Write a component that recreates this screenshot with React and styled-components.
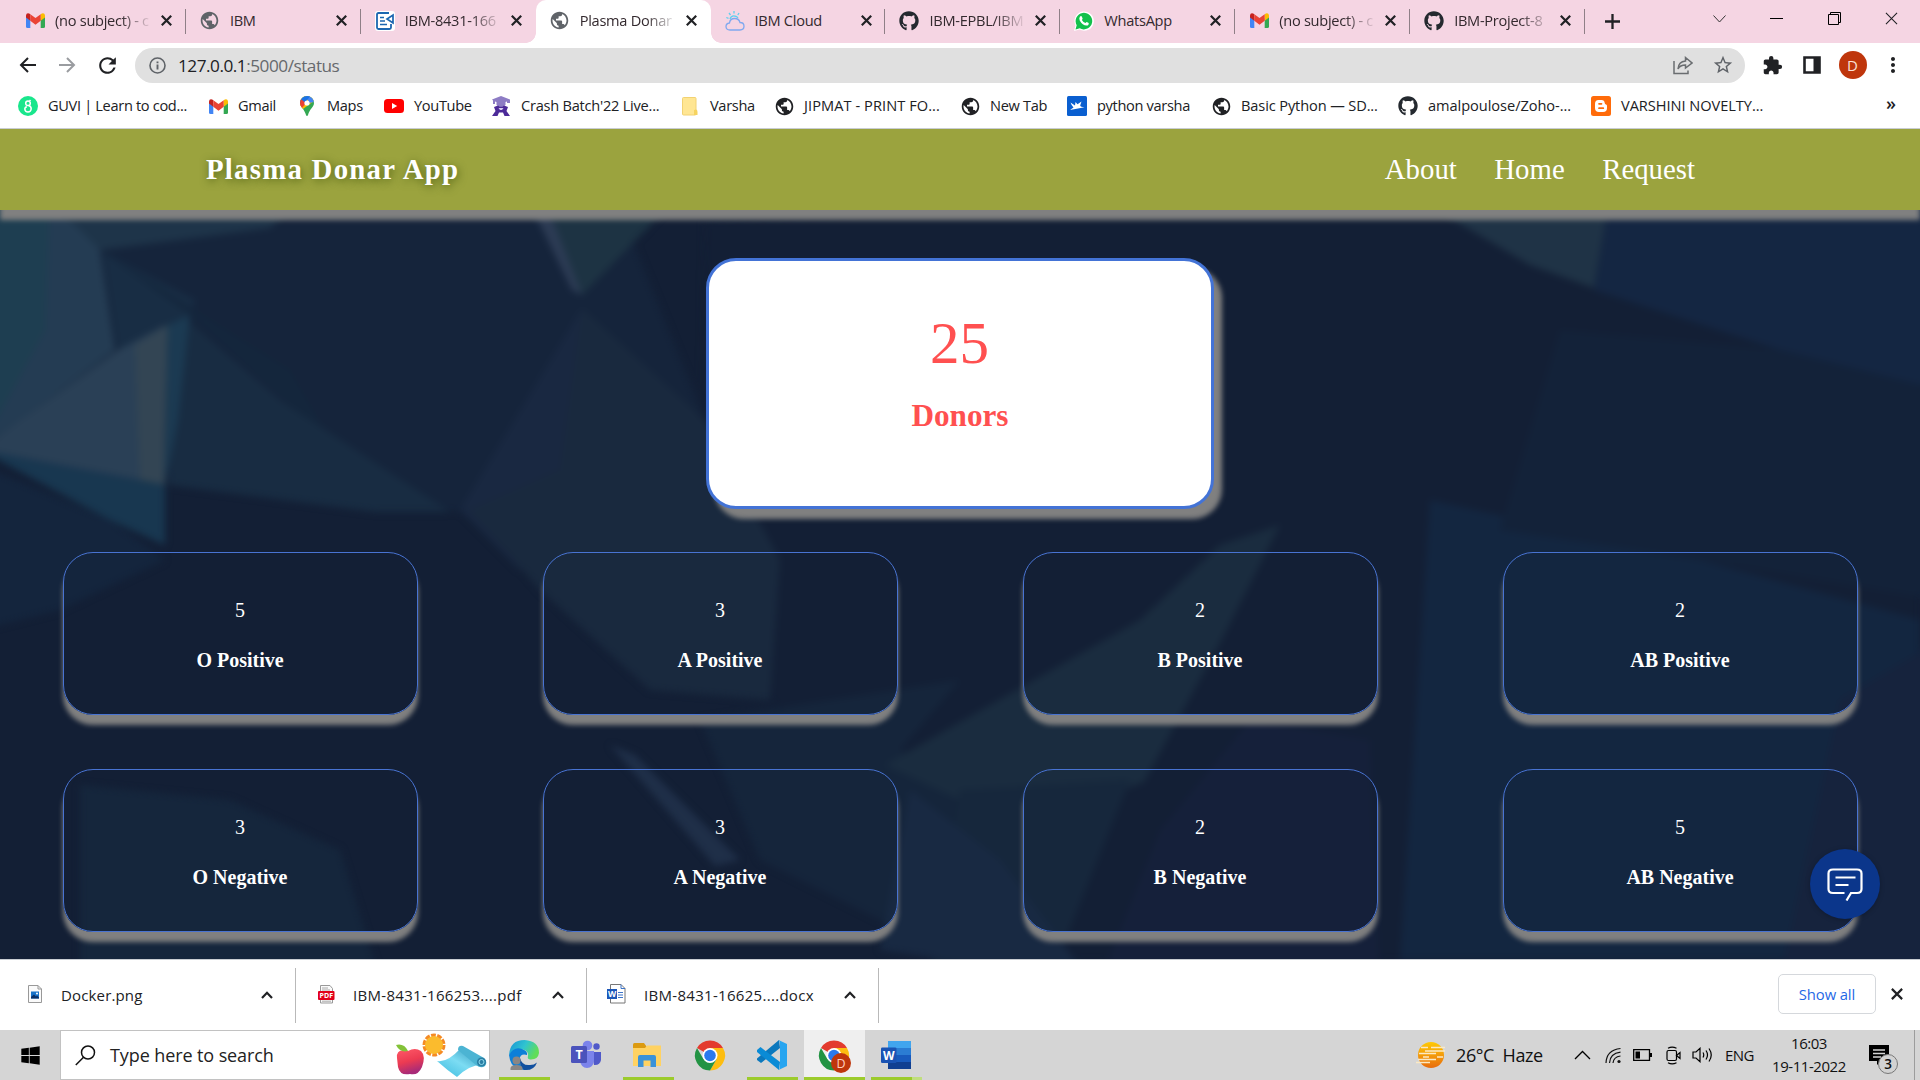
import React from "react";
import styled, { createGlobalStyle, css } from "styled-components";
import { FaGithub, FaWindows } from "react-icons/fa6";
import { MdPublic, MdExtension, MdStarBorder, MdRefresh, MdMoreVert } from "react-icons/md";

const ui = `"Open Sans", "Noto Sans", sans-serif`;
const serif = `"Liberation Serif", serif`;

const Global = createGlobalStyle`
  * { box-sizing: border-box; }
  body { margin: 0; overflow: hidden; font-family: ${ui}; color: #202124; }
  svg { display: block; flex: none; }
`;

const Screen = styled.div`
  width: 1920px;
  height: 1080px;
  display: flex;
  flex-direction: column;
  overflow: hidden;
  background: #fff;
`;

/* ---------- Browser tabs ---------- */

const TabStrip = styled.div`
  height: 43px;
  flex: none;
  display: flex;
  padding-left: 11px;
  background: #f5d5e3;
`;

const TabBox = styled.div`
  position: relative;
  width: 174.9px;
  height: 43px;
  padding-left: 14px;
  display: flex;
  align-items: center;
  padding-bottom: 2px;
  ${(p) => p.$divider && css`
    background: linear-gradient(#8f7f87, #8f7f87) right 0 top 9px / 1px 25px no-repeat;
  `}
  ${(p) => p.$active && css`
    background: #fff;
    border-radius: 10px 10px 0 0;
    &::before, &::after {
      content: "";
      position: absolute;
      bottom: 0;
      width: 10px;
      height: 10px;
    }
    &::before { left: -10px; background: radial-gradient(circle at 0 0, transparent 9.5px, #fff 10px); }
    &::after { right: -10px; background: radial-gradient(circle at 100% 0, transparent 9.5px, #fff 10px); }
  `}
`;

const IconSlot = styled.span`
  width: 20px;
  height: 20px;
  flex: none;
  display: flex;
  align-items: center;
  justify-content: center;
`;

const TabTitle = styled.span`
  width: 106px;
  margin-left: 10px;
  padding-bottom: 1px;
  white-space: nowrap;
  font-size: 14.6px;
  letter-spacing: -0.28px;
  color: #33292e;
  mask-image: ${(p) => (p.$fade ? "linear-gradient(90deg, #000 62%, transparent 92%)" : "none")};
`;

const NewTab = styled.div`
  width: 54px;
  display: flex;
  align-items: center;
  justify-content: center;
`;

const WindowButtons = styled.div`
  margin-left: auto;
  height: 37px;
  display: flex;
  align-items: center;
`;

const WindowButton = styled.span`
  width: 57.3px;
  display: flex;
  justify-content: center;
`;

/* ---------- Toolbar ---------- */

const Toolbar = styled.div`
  height: 45px;
  flex: none;
  display: flex;
  align-items: center;
  padding-left: 7px;
`;

const ToolButton = styled.span`
  width: ${(p) => p.$w || 40}px;
  height: 35px;
  display: flex;
  align-items: center;
  justify-content: center;
  padding-bottom: 1px;
`;

const Omnibox = styled.div`
  width: 1610px;
  height: 35px;
  margin: 0 7px 0 8px;
  border-radius: 18px;
  background: #e0e0e0;
  display: flex;
  align-items: center;
  padding: 0 2px 0 14px;
`;

const Url = styled.span`
  flex: 1;
  margin-left: 12px;
  font-size: 17.2px;
  letter-spacing: -0.48px;
  color: #202124;
  span { color: #66696d; }
`;

const Avatar = styled.span`
  width: 28px;
  height: 28px;
  border-radius: 50%;
  background: #bf360c;
  color: #fbe0d6;
  font: 15px/28px ${ui};
  text-align: center;
`;

/* ---------- Bookmarks ---------- */

const BookmarkBar = styled.div`
  height: 41px;
  flex: none;
  display: flex;
  align-items: flex-start;
  padding: 8px 0 0 18px;
  border-bottom: 1px solid #c9cdd2;
`;

const BookmarkBox = styled.div`
  width: ${(p) => p.$w}px;
  height: 20px;
  display: flex;
  align-items: center;
  white-space: nowrap;
  font-size: 14.6px;
  letter-spacing: ${(p) => p.$track ?? -0.33}px;
  gap: 10px;
`;

const BookmarkName = styled.span`
  padding-bottom: 2px;
`;

const More = styled.span`
  font-size: 18px;
  font-weight: 600;
  line-height: 15px;
  margin-left: auto;
  padding-right: 24px;
`;

/* ---------- Page ---------- */

const Page = styled.main`
  position: relative;
  height: 830px;
  flex: none;
  overflow: hidden;
  display: flex;
  flex-direction: column;
  background: #131f35;
  font-family: ${serif};
`;

const Backdrop = styled.svg`
  position: absolute;
  inset: 0;
`;

const Header = styled.header`
  position: relative;
  height: 81px;
  flex: none;
  display: flex;
  align-items: center;
  padding: 0 225px 0 206px;
  background: #9ba33e;
  box-shadow: 0 10px 5px gray;
  color: #fff;
  font-size: 28.8px;
`;

const Brand = styled.div`
  font-weight: bold;
  letter-spacing: 1.26px;
  text-shadow: 1px 2px 8px rgba(50, 70, 0, 0.65);
`;

const Nav = styled.nav`
  margin-left: auto;
  display: flex;
  gap: 37.5px;
`;

const Total = styled.section`
  position: relative;
  align-self: center;
  width: 508px;
  height: 251px;
  margin-top: 48px;
  flex: none;
  border: 3px solid #4373d6;
  border-radius: 30px;
  background: #fff;
  box-shadow: 8px 10px 5px gray;
  color: #ff5050;
  text-align: center;
`;

const TotalCount = styled.div`
  margin-top: 48px;
  padding-right: 1px;
  font-size: 59px;
  line-height: 68px;
`;

const TotalLabel = styled.div`
  margin-top: 21px;
  font-size: 31.2px;
  line-height: 36px;
  font-weight: bold;
`;

const Groups = styled.section`
  position: relative;
  display: grid;
  grid-template-columns: repeat(4, 355px);
  column-gap: 125px;
  row-gap: 54px;
  margin: 43px 0 0 63px;
`;

const GroupCard = styled.article`
  height: 163px;
  border: 1px solid #4873d2;
  border-radius: 30px;
  box-shadow: 0 10px 5px gray;
  color: #fff;
  font-size: 20px;
  line-height: 23px;
  text-align: center;
  padding: 46px 1px 0 0;
`;

const GroupName = styled.div`
  margin-top: 27px;
  font-weight: bold;
`;

const ChatButton = styled.button`
  position: absolute;
  left: 1810px;
  top: 720px;
  width: 70px;
  height: 70px;
  padding: 0;
  border: 0;
  border-radius: 50%;
  background: #0b368b;
  box-shadow: 0 1px 5px rgba(0, 0, 0, 0.25);
  display: flex;
  align-items: center;
  justify-content: center;
`;

/* ---------- Downloads ---------- */

const DownloadBar = styled.div`
  height: 71px;
  flex: none;
  display: flex;
  align-items: center;
  border-top: 1px solid #c9cdd2;
`;

const DownloadBox = styled.div`
  width: ${(p) => p.$w}px;
  height: 55px;
  display: flex;
  align-items: center;
  border-right: 1px solid #b9b9b9;
  padding: 0 22px 0 ${(p) => p.$pad}px;
  font-size: 15px;
  white-space: nowrap;
  > svg:first-child { margin-bottom: 2px; }
  > svg:last-child { margin-left: auto; }
`;

const FileName = styled.span`
  margin-left: ${(p) => p.$gap}px;
  letter-spacing: ${(p) => p.$track}px;
`;

const ShowAll = styled.button`
  margin: 0 6px 2px auto;
  width: 98px;
  height: 40px;
  padding: 0 0 1px;
  border: 1px solid #d5d8dc;
  border-radius: 5px;
  background: #fff;
  color: #1f69e6;
  font: 14.8px ${ui};
  letter-spacing: -0.1px;
`;

const CloseSlot = styled.span`
  width: 30px;
  display: flex;
  justify-content: center;
  margin: 0 8px 2px 0;
`;

/* ---------- Taskbar ---------- */

const Taskbar = styled.div`
  height: 50px;
  flex: none;
  display: flex;
  background: #d5d5d5;
  color: #111;
`;

const Start = styled.div`
  width: 60px;
  display: flex;
  align-items: center;
  justify-content: center;
  color: #000;
`;

const Search = styled.div`
  width: 430px;
  border: 1px solid #c2c2c2;
  background: #fff;
  display: flex;
  align-items: center;
  padding-left: 14px;
`;

const SearchText = styled.span`
  flex: 1;
  margin-left: 14px;
  font-size: 18px;
  letter-spacing: -0.1px;
  color: #222;
`;

const AppSlot = styled.div`
  width: ${(p) => p.$w || 51}px;
  margin-left: ${(p) => p.$gap}px;
  height: 50px;
  display: flex;
  align-items: center;
  padding-left: ${(p) => p.$pad ?? 10}px;
  background: ${(p) => (p.$active ? "#efefef" : "transparent")};
  border-bottom: 3px solid ${(p) => (p.$running ? "#9ccb2c" : "transparent")};
  padding-top: 3px;
`;

const SecondWindow = styled.div`
  width: 10px;
  height: 3px;
  align-self: flex-end;
  background: #c0de7e;
`;

const Tray = styled.div`
  margin-left: auto;
  width: 504px;
  display: flex;
  align-items: center;
`;

const Weather = styled.span`
  width: 118px;
  margin-left: 10px;
  font-size: 18px;
  letter-spacing: -0.4px;
  white-space: pre;
`;

const TraySlot = styled.span`
  width: ${(p) => p.$w}px;
  display: flex;
`;

const Language = styled.span`
  width: 46px;
  font-size: 15px;
  letter-spacing: -0.6px;
`;

const Clock = styled.span`
  width: 76px;
  text-align: center;
  font-size: 15px;
  line-height: 23px;
  letter-spacing: -0.45px;
  white-space: nowrap;
`;

const Notifications = styled.span`
  margin-left: 22px;
  width: 45px;
  height: 50px;
  display: flex;
  align-items: center;
  position: relative;
`;

const Count = styled.span`
  position: absolute;
  left: 9px;
  top: 24px;
  width: 20px;
  height: 20px;
  border: 1px solid #777;
  border-radius: 50%;
  background: #d2d2d2;
  font: 600 13.5px/18px ${ui};
  text-align: center;
`;

const DesktopEdge = styled.span`
  width: 1px;
  height: 50px;
  background: #9c9c9c;
`;

/* ---------- Icons ---------- */

const Gmail = () => (
  <svg width="19" height="15" viewBox="0 0 19 15">
    <path d="M0 2.5V13.500Q0 15 1.500 15H4.300V5.500Z" fill="#4285f4" />
    <path d="M19 2.500V13.500Q19 15 17.500 15H14.700V5.500Z" fill="#34a853" />
    <path d="M14.700 1.200V7.800L19 4.500V2.300Q18.500-.6 15.800.4Z" fill="#fbbc04" />
    <path d="M0 2.300V4.500L4.300 7.800V1.200L3.200.4Q.4-.6 0 2.300Z" fill="#c5221f" />
    <path d="M4.300 1.200V7.800L9.500 11.700L14.700 7.800V1.200L9.500 5.100Z" fill="#ea4335" />
  </svg>
);

const Cross = ({ s = 11, w = 2.2, color = "#202124" }) => (
  <svg width={s} height={s} viewBox="0 0 11 11">
    <path d="M.8.8l9.400 9.400M10.200.8L.8 10.200" stroke={color} strokeWidth={w} />
  </svg>
);

const Survey = () => (
  <svg width="20" height="20" viewBox="0 0 20 20">
    <rect width="20" height="20" rx="3" fill="#fff" />
    <path d="M14 2H3.500Q2 2 2 3.500V16.500Q2 18 3.500 18H14.500Q16 18 16 16.500V13" fill="none" stroke="#1b66b0" strokeWidth="1.800" />
    <path d="M5 6.500H9M5 10H10M5 13.500H12M18 4V12L12 8Z" fill="none" stroke="#1b66b0" strokeWidth="1.700" />
  </svg>
);

const Cloud = () => (
  <svg width="20" height="22" viewBox="0 0 20 22" fill="none" strokeWidth="1.300">
    <path d="M9 1V3.500M4 3L5.500 5M14 3L12.800 5M1.300 7.500L3.500 8.300M5 9Q6 5.500 9.500 6Q12 6.300 13 8" stroke="#5fd0ef" />
    <path d="M5 20Q1 20 1 16.500Q1 13.500 4.500 13Q5 8.500 9.700 8.500Q14 8.500 15 12.500Q19 12.500 19 16.300Q19 20 15 20Z" stroke="#7fa8ef" />
  </svg>
);

const WhatsApp = () => (
  <svg width="20" height="20" viewBox="0 0 20 20">
    <path d="M0 20L1.500 14.500A9.700 9.700 0 1 1 5.500 18.600Z" fill="#fff" />
    <path d="M1.500 18.500L2.700 14.200A8.300 8.300 0 1 1 5.800 17.300Z" fill="#12c14c" />
    <path d="M6 5.500Q7.500 4.500 8 6L8.600 7.500Q8.700 8 7.900 8.900Q9.200 11.200 11.500 12Q12.400 11 12.800 11L14.700 12Q15 14.500 12.500 14.600Q8.500 14.500 5.700 9.500Q4.800 7 6 5.500Z" fill="#fff" />
  </svg>
);

const Guvi = () => (
  <svg width="20" height="20" viewBox="0 0 20 20">
    <circle cx="10" cy="10" r="10" fill="#19e68c" />
    <path d="M12.500 4L11.500 5.200M10 5A2.300 2.300 0 1 0 10 9.600A2.300 2.300 0 1 0 10 5M10.500 9.500Q13.300 10 13.200 13Q12.800 16 10 16Q7 16 6.800 13Q7 10.800 9 10.700" fill="none" stroke="#fff" strokeWidth="1.500" />
  </svg>
);

const Maps = () => (
  <svg width="14" height="20" viewBox="0 0 14 20">
    <defs><clipPath id="pin"><path d="M7 0a7 7 0 0 1 7 7c0 4-4.500 6-6 12q-.3 1-1 1t-1-1C4.500 13 0 11 0 7a7 7 0 0 1 7-7Z" /></clipPath></defs>
    <g clipPath="url(#pin)">
      <rect width="14" height="20" fill="#34a853" />
      <path d="M0 0H14V5L3 13L0 12Z" fill="#fbbc04" />
      <path d="M6-1H14V6L9 7Z" fill="#4285f4" />
      <path d="M0 0H10L4 9L0 7Z" fill="#1a73e8" />
      <path d="M0 2.500L6 7L2 12L-1 10Z" fill="#ea4335" />
      <circle cx="7" cy="7" r="2.600" fill="#fff" />
    </g>
  </svg>
);

const YouTube = () => (
  <svg width="20" height="14" viewBox="0 0 20 14"><rect width="20" height="14" rx="3.500" fill="#f00" /><path d="M8 4L13.200 7L8 10Z" fill="#fff" /></svg>
);

const Scholar = () => (
  <svg width="18" height="20" viewBox="0 0 18 20">
    <path d="M0 3.500L9 0L18 3.500V7H15V5.500L13.500 6V9Q9 13 4.500 9V6L3 5.500V8H1V4.500Z" fill="#8d7cc4" />
    <path d="M2 11L6 9.500Q9 12 12 9.500L16 11L14.500 15L18 20H12.500L11 16.500H7L5.500 20H0L3.500 15Z" fill="#4d2b99" />
    <path d="M6.500 12H11.500L10 14H8Z" fill="#d8cff0" />
  </svg>
);

const FolderMark = () => (
  <svg width="16" height="19" viewBox="0 0 16 19"><rect x=".5" y=".5" width="13.500" height="17.500" rx="1" fill="#ffe693" stroke="#f2d272" /><path d="M12 13Q15.500 11.500 15.500 15V18H12Z" fill="#f6d35f" /></svg>
);

const Bird = () => (
  <svg width="20" height="20" viewBox="0 0 20 20"><rect width="20" height="20" rx="1.500" fill="#0a5fd0" /><path d="M3.500 6.500L8 9.500L8.500 6L10.500 8.300L14.500 5.500L13.200 9.500Q13.500 11 17.500 11.200L11 12.500L3 14L6.500 11.500Q4.500 9.500 3.500 6.500Z" fill="#fff" /></svg>
);

const Blogger = () => (
  <svg width="20" height="20" viewBox="0 0 20 20">
    <rect width="20" height="20" rx="2.500" fill="#ff6b0a" />
    <path d="M7.500 4H10.500Q13.500 4 13.700 7Q13.800 8.300 15 8.500Q16 8.600 16 10V12Q16 16 12 16H8Q4 16 4 12V8Q4 4 7.500 4Z" fill="#fff" />
    <path d="M8 7.800H10.500M8 12.200H12.300" stroke="#ff6b0a" strokeWidth="1.700" strokeLinecap="round" />
  </svg>
);

const Arrow = ({ forward, color }) => (
  <svg width="17" height="16" viewBox="0 0 17 16" fill="none" stroke={color} strokeWidth="2">
    <path d={forward ? "M0 8H15M8 1L15 8L8 15" : "M17 8H2M9 1L2 8L9 15"} />
  </svg>
);

const Info = () => (
  <svg width="17" height="17" viewBox="0 0 17 17" fill="none" stroke="#5f6368" strokeWidth="1.600">
    <circle cx="8.500" cy="8.500" r="7.500" /><path d="M8.500 7.500V12.500M8.500 4.500V6.200" strokeWidth="1.900" />
  </svg>
);

const Share = () => (
  <svg width="20" height="19" viewBox="0 0 20 19" fill="none" stroke="#6a6d70" strokeWidth="1.500">
    <path d="M1 5V17.500H15V14.500" /><path d="M12.500 1.500L19 7L12.500 12V9Q7 9 5 13Q5.500 5.500 12.500 5Z" />
  </svg>
);

const SidePanel = () => (
  <svg width="18" height="18" viewBox="0 0 18 18"><path d="M1.500 1.500H16.500V16.500H1.500Z" fill="#fff" stroke="#202124" strokeWidth="2.600" /><rect x="10.500" y="1" width="6.500" height="16" fill="#202124" /></svg>
);

const Chevron = () => (
  <svg width="12" height="8" viewBox="0 0 12 8"><path d="M1 7L6 1.800L11 7" fill="none" stroke="#202124" strokeWidth="2.200" /></svg>
);

const Chat = () => (
  <svg width="36" height="33" viewBox="0 0 36 33" fill="none" stroke="#fff" strokeWidth="2.200">
    <path d="M17.500 25H6Q1.500 25 1.500 21V5.500Q1.500 1.500 6 1.500H30Q34.500 1.500 34.500 5.500V21Q34.500 25 30 25H24L19.500 32.500" />
    <path d="M8.500 9.500H28.500M8.500 17H21.500" />
  </svg>
);

const ImageFile = () => (
  <svg width="14" height="19" viewBox="0 0 14 19"><path d="M.5.5H10L13.500 4V17.500H.5Z" fill="#fafafa" stroke="#999" /><path d="M10 .5V4H13.500" fill="none" stroke="#999" /><rect x="3" y="6.500" width="8" height="7" fill="#1772c9" /><path d="M3 13.500V12L6 9.500L8 11.500L9 10.500L11 12.500V13.500Z" fill="#0a2f66" /><circle cx="9" cy="8.500" r="1" fill="#fff" /></svg>
);

const PdfFile = () => (
  <svg width="17" height="19" viewBox="0 0 17 19">
    <path d="M2.500.5H12L14.500 3.500V18H2.500Z" fill="#fafafa" stroke="#999" /><path d="M4 3H10M4 5H12M4 16.200H13" stroke="#aaa" />
    <rect y="6" width="16.500" height="9" rx="1" fill="#e2001a" />
    <text x="8.300" y="13" textAnchor="middle" fontFamily="Open Sans, sans-serif" fontSize="7" fontWeight="700" fill="#fff">PDF</text>
  </svg>
);

const WordFile = () => (
  <svg width="19" height="20" viewBox="0 0 19 20">
    <path d="M3.500.500H14L18 4.500V19H3.500Z" fill="#fff" stroke="#777" /><path d="M14 .5V4.500H18M11 8.500H16M11 11H16M11 13.500H16" fill="none" stroke="#3b73c8" />
    <rect y="5" width="10" height="10" fill="#1d57b8" />
    <text x="5" y="13" textAnchor="middle" fontFamily="Open Sans, sans-serif" fontSize="8.500" fontWeight="700" fill="#fff">W</text>
  </svg>
);

const SearchIcon = () => (
  <svg width="21" height="21" viewBox="0 0 21 21" fill="none" stroke="#111" strokeWidth="1.500"><circle cx="13" cy="7.500" r="6.500" /><path d="M8.500 12.200L.8 20" /></svg>
);

const Picnic = () => (
  <svg width="94" height="48" viewBox="0 0 94 48">
    <defs>
      <linearGradient id="apple" x1="0" y1="0" x2=".3" y2="1"><stop offset="0" stopColor="#ff5a68" /><stop offset=".55" stopColor="#ec3b52" /><stop offset="1" stopColor="#a82a78" /></linearGradient>
      <linearGradient id="mat" x1="0" y1="1" x2="1" y2="0"><stop offset="0" stopColor="#39b9dd" /><stop offset=".5" stopColor="#7cdcf3" /><stop offset="1" stopColor="#2a8fb5" /></linearGradient>
    </defs>
    <path d="M2 27Q1 17 13 20Q20 16 26 20Q31 25 27 36Q23 45 15 43Q5 45 3 36Z" fill="url(#apple)" />
    <path d="M13 20Q5 22 1 14Q9 12 13 20Z" fill="#83c238" />
    <circle cx="39" cy="14" r="9.500" fill="none" stroke="#f58a24" strokeWidth="4" strokeDasharray="4.600 1.350" />
    <circle cx="39" cy="14" r="9" fill="#fbbb2d" />
    <path d="M42 30Q52 32 65 18L88 34Q75 33 62 46Q52 39 42 30Z" fill="url(#mat)" />
    <path d="M63 19Q63 14 68 15L89 27Q93 31 90 35Q86 38 81 34Z" fill="#4cb4d3" />
    <circle cx="86.500" cy="31" r="4.600" fill="#2b7fa5" /><circle cx="86.500" cy="31" r="2.500" fill="none" stroke="#8edbed" />
  </svg>
);

const Edge = () => (
  <svg width="31" height="31" viewBox="0 0 31 31">
    <defs>
      <linearGradient id="edgeTop" x1="0" y1="0" x2="1" y2=".4"><stop offset="0" stopColor="#1693d6" /><stop offset=".55" stopColor="#30c4d0" /><stop offset="1" stopColor="#61dd58" /></linearGradient>
    </defs>
    <path d="M0 15Q1 0 15.500 0Q30 1 30 13Q29 20 21 19.500Q18 19 19 16Q20 11 14 9.500Q6 9 0 15Z" fill="url(#edgeTop)" />
    <path d="M0 15Q5 6 13 9Q19 11 18 15Q11 13 10.500 20Q11 28 19 30Q4 31 1 20Z" fill="#0c7fd8" />
    <path d="M11 18Q13 26 21 25Q25 25 28 22.500Q25 31 15 30Q10 26 11 18Z" fill="#11509f" />
    <circle cx="7.500" cy="20.500" r="4" fill="#8a8684" /><path d="M1.500 30V28Q2 25 7.500 25Q13 25 13.500 28V30Z" fill="#8a8684" />
  </svg>
);

const Teams = () => (
  <svg width="31" height="30" viewBox="0 0 31 30">
    <circle cx="16.500" cy="5.500" r="4.800" fill="#7b83eb" /><circle cx="25.500" cy="6.500" r="3.200" fill="#5059c9" />
    <path d="M21 12H30V20Q29 25.500 23 25Z" fill="#5059c9" /><path d="M9 11H23V21Q22 28 16 28Q10 27.500 9 21Z" fill="#7b83eb" />
    <rect y="6" width="16" height="17" rx="1.500" fill="#4b53bc" />
    <text x="8" y="19" textAnchor="middle" fontFamily="Open Sans, sans-serif" fontWeight="700" fontSize="12.500" fill="#fff">T</text>
  </svg>
);

const Explorer = () => (
  <svg width="29" height="25" viewBox="0 0 29 25">
    <path d="M0 1.500Q0 0 1.500 0H11L13.500 3.500V6H0Z" fill="#dc9a10" /><path d="M0 5H12L14 2.500H28V23H0Z" fill="#ffd262" />
    <path d="M5 24V14Q5 12 7 12H21Q23 12 23 14V24H17.500V17.500H10.500V24Z" fill="#3b92d8" />
  </svg>
);

const Chrome = ({ badge }) => (
  <svg width="33" height="33" viewBox="0 0 33 33" overflow="visible">
    <g transform="translate(0 1.500)">
      <path d="M15 15L2 7.500A15 15 0 0 1 28 7.500Z" fill="#e33b2e" />
      <path d="M15 7.500H28A15 15 0 0 1 15 30L21.500 18.700Z" fill="#fdbd10" />
      <path d="M8.500 18.700L2 7.500A15 15 0 0 0 15 30L21.500 18.700Z" fill="#229343" />
      <circle cx="15" cy="15" r="7.500" fill="#fff" /><circle cx="15" cy="15" r="5.800" fill="#2b79ee" />
    </g>
    {badge && <><circle cx="22" cy="24" r="10" fill="#bf360c" /><text x="22" y="28.500" textAnchor="middle" fontFamily="Open Sans, sans-serif" fontSize="12.500" fill="#ffd0bf">D</text></>}
  </svg>
);

const Code = () => (
  <svg width="30" height="30" viewBox="0 0 30 30">
    <path d="M22 0L23 8L4 23L0 20V18.500Z" fill="#0b78bd" /><path d="M0 10L3.500 7L23 22L22 30L0 12Z" fill="#0a8bd6" />
    <path d="M21.500 0L30 4V26L21.500 30Q23 29 23 26V4Q23 1 21.500 0Z" fill="#27a5f0" />
  </svg>
);

const Word = () => (
  <svg width="30" height="28" viewBox="0 0 30 28">
    <path d="M7 0H30V7H7Z" fill="#41a5ee" /><path d="M7 7H30V14H7Z" fill="#2b7cd3" /><path d="M7 14H30V21H7Z" fill="#185abd" /><path d="M7 21H30V28H7Z" fill="#103f91" />
    <rect y="6.500" width="15.500" height="15.500" rx="1.300" fill="#1a53b3" />
    <text x="7.700" y="19" textAnchor="middle" fontFamily="Open Sans, sans-serif" fontWeight="700" fontSize="12" fill="#fff">W</text>
  </svg>
);

const Haze = () => (
  <svg width="30" height="26" viewBox="0 0 30 26">
    <defs><linearGradient id="sun" x1="0" y1="0" x2="0" y2="1"><stop offset="0" stopColor="#ffca05" /><stop offset="1" stopColor="#e86c0d" /></linearGradient></defs>
    <circle cx="15" cy="13" r="13" fill="url(#sun)" />
    <path d="M5 5.500H12M15 5.500H29M9 9H29M3 11.500H20M7 15H13M21 15H27M0 20.500H14M2 17.500H20" stroke="#fbe9c4" strokeWidth="1.500" />
  </svg>
);

const TrayUp = () => <svg width="17" height="10" viewBox="0 0 17 10"><path d="M1 9L8.500 1.500L16 9" fill="none" stroke="#000" strokeWidth="1.300" /></svg>;
const Wifi = () => (
  <svg width="17" height="17" viewBox="0 0 17 17" fill="none" stroke="#111" strokeWidth="1.200">
    <path d="M1 16Q1.500 3 15.500 1.500M4.500 16Q5 6.500 15.500 5.200M8 16Q8.500 10 15.500 9" /><circle cx="14" cy="14.500" r="1.600" fill="#111" stroke="none" />
  </svg>
);
const Battery = () => <svg width="19" height="12" viewBox="0 0 19 12"><path d="M.7.700H16.500V11.300H.7Z" fill="none" stroke="#000" strokeWidth="1.300" /><path d="M2.500 2.500H7V9.500H2.500ZM17 4H19V8H17Z" /></svg>;
const Camera = () => (
  <svg width="15" height="19" viewBox="0 0 15 19" fill="none" stroke="#000" strokeWidth="1.200"><rect x="1" y="4.500" width="9.500" height="10" rx="1.500" /><path d="M10.500 9.500L14 6.500V12.500ZM2 2.200Q6 0 10.500 2.200M2 16.800Q6 19 10.500 16.800" /></svg>
);
const Volume = () => (
  <svg width="21" height="16" viewBox="0 0 21 16" fill="none" stroke="#000" strokeWidth="1.200"><path d="M1 5H4L8 1.300V14.700L4 11H1ZM11 5.500Q12.500 8 11 10.500M14 3.500Q17 8 14 12.500M17 1.500Q21.500 8 17 14.500" /></svg>
);
const Note = () => (
  <svg width="20" height="21" viewBox="0 0 20 21"><path d="M0 0H20V16H12L8 20V16H0Z" /><path d="M4 5H16M4 8.500H16M4 12H12" stroke="#d5d5d5" strokeWidth="1.300" /></svg>
);

/* ---------- Data ---------- */

const globe = <MdPublic size={21} color="#5f6368" />;
const darkGlobe = <MdPublic size={21} color="#202124" />;
const octocat = <FaGithub size={20} color="#24292f" />;

const tabs = [
  { title: "(no subject) - c", icon: <Gmail />, fade: true },
  { title: "IBM", icon: globe },
  { title: "IBM-8431-166", icon: <Survey />, fade: true },
  { title: "Plasma Donar", icon: globe, active: true, fade: true },
  { title: "IBM Cloud", icon: <Cloud /> },
  { title: "IBM-EPBL/IBM", icon: octocat, fade: true },
  { title: "WhatsApp", icon: <WhatsApp /> },
  { title: "(no subject) - c", icon: <Gmail />, fade: true },
  { title: "IBM-Project-8", icon: octocat, fade: true },
];

const bookmarks = [
  { name: "GUVI | Learn to cod...", icon: <Guvi />, w: 190 },
  { name: "Gmail", icon: <Gmail />, w: 89 },
  { name: "Maps", icon: <Maps />, w: 87 },
  { name: "YouTube", icon: <YouTube />, w: 107 },
  { name: "Crash Batch'22 Live...", icon: <Scholar />, w: 189, track: -0.24 },
  { name: "Varsha", icon: <FolderMark />, w: 94 },
  { name: "JIPMAT - PRINT FO...", icon: darkGlobe, w: 186, track: 0.07 },
  { name: "New Tab", icon: darkGlobe, w: 107 },
  { name: "python varsha", icon: <Bird />, w: 144 },
  { name: "Basic Python — SD...", icon: darkGlobe, w: 187, track: -0.12 },
  { name: "amalpoulose/Zoho-...", icon: octocat, w: 193, track: -0.05 },
  { name: "VARSHINI NOVELTY...", icon: <Blogger />, w: 200, track: -0.04 },
];

const groups = [
  ["5", "O Positive"], ["3", "A Positive"], ["2", "B Positive"], ["2", "AB Positive"],
  ["3", "O Negative"], ["3", "A Negative"], ["2", "B Negative"], ["5", "AB Negative"],
];

const facets = [
  ["0,210 620,210 705,420 460,512 0,450", "#15243b"],
  ["705,220 960,210 1920,210 1920,960 960,960 700,600", "#131f35"],
  ["1430,500 1700,560 1920,620 1920,960 1400,960", "#132640"],
  ["1609,200 1940,200 1940,390 1780,350 1594,290", "#142642"],
  ["1780,350 1940,390 1940,600 1700,560 1500,530 1560,330", "#132239"],
  ["-20,200 55,200 100,250 115,350 -20,450", "#243c53"],
  ["-20,200 50,200 45,330 -20,450", "#1e3e51"],
  ["50,200 300,200 270,228 100,250", "#1e3449"],
  ["103,252 195,300 185,330 165,325 118,350", "#182d44"],
  ["103,252 290,370 330,440 195,318", "#14263c"],
  ["-20,450 20,420 118,350 165,325 165,485", "#2a4056"],
  ["135,345 168,325 164,485 140,480", "#334554"],
  ["185,318 280,400 450,512 375,512 168,485", "#182c42"],
  ["168,325 190,315 178,420 165,485", "#1b3a52"],
  ["-20,450 165,485 165,545 110,520", "#183750"],
  ["-20,465 110,520 165,560 60,610 -20,630", "#14253d"],
  ["530,200 675,200 582,295", "#1d3343"],
  ["528,200 545,200 582,295 572,290", "#2c3b54"],
  ["582,308 460,510 520,570 570,520 640,470 610,370", "#192841"],
  ["582,308 705,420 780,560 770,700 650,690 540,590 470,510 560,470", "#19293e"],
  ["610,745 635,755 740,860 715,866", "#1f2f48"],
  ["700,720 960,680 900,750 1040,830 960,960 760,860", "#15253b"],
  ["1280,525 1220,545 1140,620 960,722 885,765 960,800 1070,810 1144,782 1223,637", "#1a2c3f"],
  ["960,790 1130,780 1070,928 1050,980 930,980", "#16273c"],
  ["1420,200 1609,200 1594,288 1530,265", "#1f3346"],
  ["80,785 230,800 340,850 380,980 80,980", "#15263c"],
  ["1160,830 1250,720 1370,740 1380,980 1100,980", "#15203a"],
  ["880,950 910,790 1000,860 1090,980", "#182942"],
  ["1840,700 1940,640 1940,980 1780,980", "#16233d"],
];

const Tab = ({ title, icon, active, fade, divider }) => (
  <TabBox $active={active} $divider={divider}>
    <IconSlot>{icon}</IconSlot>
    <TabTitle $fade={fade}>{title}</TabTitle>
    <Cross />
  </TabBox>
);

export default function App() {
  return (
    <Screen>
      <Global />
      <TabStrip>
        {tabs.map((t, i) => (
          <Tab key={i} {...t} divider={i !== 2 && i !== 3} />
        ))}
        <NewTab>
          <svg width="15" height="15" viewBox="0 0 15 15"><path d="M7.500 0V15M0 7.500H15" stroke="#202124" strokeWidth="2.300" /></svg>
        </NewTab>
        <WindowButtons>
          <WindowButton><svg width="13" height="8" viewBox="0 0 13 8"><path d="M.5.500L6.500 7L12.500.5" fill="none" stroke="#333" /></svg></WindowButton>
          <WindowButton><svg width="13" height="1" viewBox="0 0 13 1"><rect width="13" height="1" /></svg></WindowButton>
          <WindowButton><svg width="13" height="13" viewBox="0 0 13 13" fill="none" stroke="#000"><path d="M.5 2.500H10.500V12.500H.5ZM2.500 2.500V.5H12.500V10.500H10.500" /></svg></WindowButton>
          <WindowButton><Cross s={13} w={0.9} /></WindowButton>
        </WindowButtons>
      </TabStrip>

      <Toolbar>
        <ToolButton><Arrow color="#202124" /></ToolButton>
        <ToolButton><Arrow forward color="#9a9ca0" /></ToolButton>
        <ToolButton><MdRefresh size={25} /></ToolButton>
        <Omnibox>
          <Info />
          <Url>127.0.0.1<span>:5000/status</span></Url>
          <ToolButton><Share /></ToolButton>
          <ToolButton><MdStarBorder size={22} color="#5f6368" /></ToolButton>
        </Omnibox>
        <ToolButton><MdExtension size={21} /></ToolButton>
        <ToolButton><SidePanel /></ToolButton>
        <ToolButton $w={41}><Avatar>D</Avatar></ToolButton>
        <ToolButton $w={39}><MdMoreVert size={24} /></ToolButton>
      </Toolbar>

      <BookmarkBar>
        {bookmarks.map((b) => (
          <BookmarkBox key={b.name} $w={b.w} $track={b.track}>
            <IconSlot>{b.icon}</IconSlot>
            <BookmarkName>{b.name}</BookmarkName>
          </BookmarkBox>
        ))}
        <More>»</More>
      </BookmarkBar>

      <Page>
        <Backdrop width="1920" height="830" viewBox="0 129 1920 830">
          <defs><filter id="soft" colorInterpolationFilters="sRGB"><feGaussianBlur stdDeviation="3.500" /></filter></defs>
          <g filter="url(#soft)">
            {facets.map(([points, fill]) => <polygon key={points} points={points} fill={fill} />)}
          </g>
        </Backdrop>
        <Header>
          <Brand>Plasma Donar App</Brand>
          <Nav><span>About</span><span>Home</span><span>Request</span></Nav>
        </Header>
        <Total>
          <TotalCount>25</TotalCount>
          <TotalLabel>Donors</TotalLabel>
        </Total>
        <Groups>
          {groups.map(([count, name]) => (
            <GroupCard key={name}>
              {count}
              <GroupName>{name}</GroupName>
            </GroupCard>
          ))}
        </Groups>
        <ChatButton><Chat /></ChatButton>
      </Page>

      <DownloadBar>
        <DownloadBox $w={296} $pad={28}><ImageFile /><FileName $gap={19} $track={0.15}>Docker.png</FileName><Chevron /></DownloadBox>
        <DownloadBox $w={291} $pad={22}><PdfFile /><FileName $gap={18} $track={0.3}>IBM-8431-166253....pdf</FileName><Chevron /></DownloadBox>
        <DownloadBox $w={292} $pad={20}><WordFile /><FileName $gap={18} $track={0.3}>IBM-8431-16625....docx</FileName><Chevron /></DownloadBox>
        <ShowAll>Show all</ShowAll>
        <CloseSlot><Cross s={12} w={2} /></CloseSlot>
      </DownloadBar>

      <Taskbar>
        <Start><FaWindows size={21} /></Start>
        <Search><SearchIcon /><SearchText>Type here to search</SearchText><Picnic /></Search>
        <AppSlot $gap={9} $running><Edge /></AppSlot>
        <AppSlot $gap={11}><Teams /></AppSlot>
        <AppSlot $gap={11} $running><Explorer /></AppSlot>
        <AppSlot $gap={11}><Chrome /></AppSlot>
        <AppSlot $gap={11} $running><Code /></AppSlot>
        <AppSlot $gap={6} $w={61} $pad={15} $running $active><Chrome badge /></AppSlot>
        <AppSlot $gap={6} $w={41} $running><Word /></AppSlot>
        <SecondWindow />
        <Tray>
          <Haze />
          <Weather>{"26°C  Haze"}</Weather>
          <TraySlot $w={31}><TrayUp /></TraySlot>
          <TraySlot $w={28}><Wifi /></TraySlot>
          <TraySlot $w={33}><Battery /></TraySlot>
          <TraySlot $w={26}><Camera /></TraySlot>
          <TraySlot $w={33}><Volume /></TraySlot>
          <Language>ENG</Language>
          <Clock>16:03<br />19-11-2022</Clock>
          <Notifications><Note /><Count>3</Count></Notifications>
          <DesktopEdge />
        </Tray>
      </Taskbar>
    </Screen>
  );
}
